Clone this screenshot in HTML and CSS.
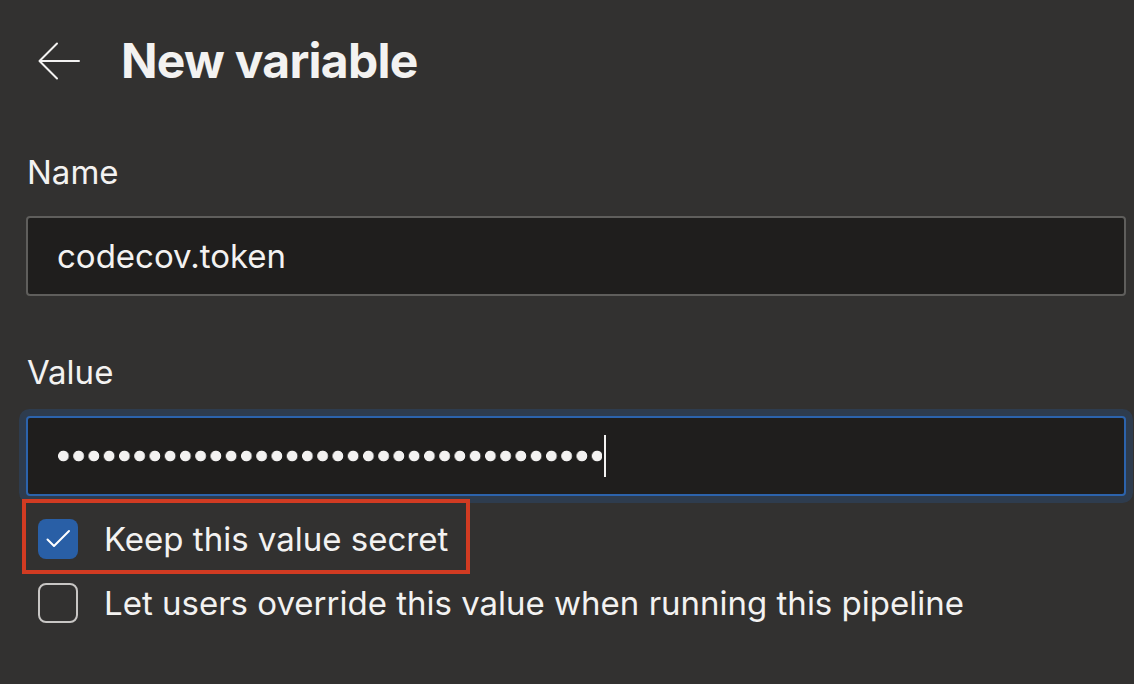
FILE: index.html
```html
<!DOCTYPE html>
<html lang="en">
<head>
<meta charset="utf-8">
<title>New variable</title>
<link rel="stylesheet" href="styles.css">
</head>
<body>
<div class="panel">
  <header class="header">
    <button class="back" aria-label="Back">
      <svg class="back-icon" width="42" height="40" viewBox="0 0 42 40" aria-hidden="true">
        <path d="M2 20 L41 20 M19 2.5 L1.5 20 L19 37.5" fill="none" stroke="#f3f2f1" stroke-width="2" stroke-linecap="round" stroke-linejoin="round"/>
      </svg>
    </button>
    <h1 class="title">New variable</h1>
  </header>

  <div class="field field-name">
    <div class="label">Name</div>
    <div class="input"><span class="input-text">codecov.token</span></div>
  </div>

  <div class="field field-value">
    <div class="label">Value</div>
    <div class="input input-focused">
      <span class="dots" aria-label="secret value"></span><span class="caret"></span>
    </div>
  </div>

  <div class="options">
    <div class="option option-highlight">
      <span class="box box-checked">
        <svg width="40" height="40" viewBox="0 0 40 40" aria-hidden="true">
          <path d="M9.5 20.5 L16 27 L31 12" fill="none" stroke="#ffffff" stroke-width="2" stroke-linecap="round" stroke-linejoin="round"/>
        </svg>
      </span>
      <span class="option-text">Keep this value secret</span>
    </div>
    <div class="option option-plain">
      <span class="box"></span>
      <span class="option-text">Let users override this value when running this pipeline</span>
    </div>
  </div>
</div>
</body>
</html>
```

FILE: styles.css
```css
html, body {
  margin: 0;
  padding: 0;
}

body {
  background: #323130;
  color: #f3f2f1;
  font-family: Inter, "Noto Sans", "Liberation Sans", sans-serif;
  width: 1134px;
  height: 684px;
  overflow: hidden;
}

.panel {
  padding: 0 8px 0 26px;
}

.header {
  height: 122px;
  display: flex;
  align-items: center;
}

.back {
  margin: 0 0 0 12px;
  padding: 0;
  border: 0;
  background: transparent;
  width: 42px;
  height: 40px;
  display: flex;
}

.title {
  margin: 0 0 0 41px;
  font-size: 48px;
  line-height: 48px;
  font-weight: 700;
  letter-spacing: -0.75px;
}

.field-name {
  margin-top: 30px;
}

.field-value {
  margin-top: 56px;
}

.label {
  font-size: 33px;
  line-height: 40px;
  margin-bottom: 24px;
  padding-left: 1px;
}

.input {
  box-sizing: border-box;
  height: 80px;
  background: #1f1e1d;
  border: 2px solid #5f5e5c;
  border-radius: 4px;
  display: flex;
  align-items: center;
  padding-left: 29px;
}

.input-text {
  font-size: 33px;
  line-height: 40px;
}

.input-focused {
  border-color: #2c63ac;
  box-shadow: 0 0 0 7px #2e3c4e;
  padding-left: 30px;
}

.dots {
  display: block;
  width: 544px;
  height: 12px;
  background: radial-gradient(circle at 5.4px 6px, #f3f2f1 5px, rgba(243,242,241,0) 5.7px) 0 0 / 15.25px 12px repeat-x;
}

.caret {
  display: block;
  width: 2px;
  height: 42px;
  background: #f3f2f1;
  margin-left: 2px;
}

.options {
  margin-left: -4px;
  margin-top: 3px;
}

.option {
  display: flex;
  align-items: center;
  gap: 26px;
  font-size: 33px;
  line-height: 40px;
}

.option-highlight {
  display: inline-flex;
  border: 4px solid #d13b22;
  padding: 16px 18px 11px 12px;
}

.option-plain {
  padding-left: 16px;
  margin-top: 9px;
}

.box {
  box-sizing: border-box;
  width: 40px;
  height: 40px;
  flex: 0 0 40px;
  border: 2px solid #c8c6c4;
  border-radius: 8px;
  display: flex;
}

.box-checked {
  background: #295fa6;
  border: 0;
}
```
